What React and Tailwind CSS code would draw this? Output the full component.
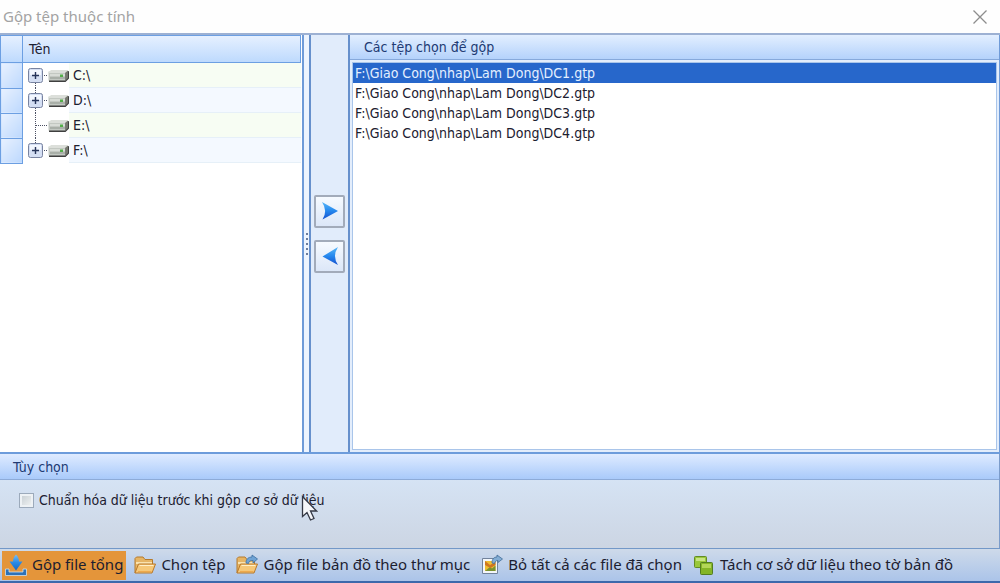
import { useState } from "react";

const drives = [
  { name: "C:\\", expandable: true },
  { name: "D:\\", expandable: true },
  { name: "E:\\", expandable: false },
  { name: "F:\\", expandable: true },
];

const files = [1, 2, 3, 4].map((n) => `F:\\Giao Cong\\nhap\\Lam Dong\\DC${n}.gtp`);

function Branch({ first, last, expandable }) {
  return (
    <svg width="25" height="25" viewBox="0 0 25 25" aria-hidden="true">
      <g stroke="#4b5063" strokeDasharray="1 1" fill="none">
        {!first && <path d="M12.5 0V12" />}
        {!last && <path d="M12.5 12V25" />}
        <path d="M13 12.5H25" />
      </g>
      {expandable && (
        <>
          <rect x="5.500" y="5.500" width="14" height="14" rx="2" fill="#d5dff3" stroke="#7883a0" />
          <rect x="7" y="7" width="11" height="5" fill="#f3f7ff" />
          <path d="M9 12.500h7M12.500 9v7" stroke="#263459" strokeWidth="1.400" />
        </>
      )}
    </svg>
  );
}

function DriveIcon() {
  return (
    <svg width="21" height="14" viewBox="0 0 21 14" aria-hidden="true">
      <path d="M1 3h17l3-1v7.500L17.500 13H1z" fill="#3f3f3f" />
      <path d="M.5 2.500h17v9H.5z" fill="#c3c8c2" />
      <path d="M.5 3.500 3 1h17L17.500 4H1z" fill="#dcdfda" />
      <path d="M17.500 3.500 20 1.500v7.500l-2.500 2.500z" fill="#77796f" />
      <path d="M2 6h15" stroke="#edf0eb" />
      <path d="M2 9h15" stroke="#90978f" />
      <rect x="12" y="5.500" width="3" height="2.500" fill="#53ae48" />
    </svg>
  );
}

function Arrow({ left }) {
  return (
    <svg width="20" height="20" viewBox="0 0 20 20" aria-hidden="true">
      <defs>
        <linearGradient id={left ? "arrowL" : "arrowR"} x1="0" y1="0" x2="0" y2="1">
          <stop offset="0" stopColor="#58b7f8" />
          <stop offset=".5" stopColor="#2588ee" />
          <stop offset="1" stopColor="#1550cf" />
        </linearGradient>
      </defs>
      {left ? (
        <path d="M18 1Q12 10 18 19L2.500 10.500z" fill="url(#arrowL)" />
      ) : (
        <path d="M2 1Q8 10 2.500 18.500L18 10z" fill="url(#arrowR)" />
      )}
    </svg>
  );
}

function DownloadIcon() {
  return (
    <svg width="22" height="22" viewBox="0 0 22 22" aria-hidden="true">
      <defs>
        <linearGradient id="down" x1="0" y1="0" x2="0" y2="1">
          <stop offset="0" stopColor="#7cc0f3" />
          <stop offset=".5" stopColor="#2b8be6" />
          <stop offset="1" stopColor="#1668c4" />
        </linearGradient>
      </defs>
      <path d="M.5 15h3.500v3h14v-3h3.500v6.500H.5z" fill="#2d72b8" stroke="#cfe2ee" strokeWidth=".8" />
      <path d="M11 .5c2 2 3 4 3 7h3.500L11 16.500 4.500 7.500H8c0-3 1-5 3-7z" fill="url(#down)" />
    </svg>
  );
}

function FolderShape() {
  return (
    <>
      <path d="M1 19V4.500L2.500 3H9l2 2.500h7.500V10" fill="#e6b565" stroke="#b57a2c" />
      <path d="M2 9h16" stroke="#f9e3b0" strokeWidth="2" />
      <path d="m1 19 3.500-9h17L18 19z" fill="#f6c878" stroke="#b9782a" />
      <path d="M5.500 11.500h14" stroke="#fff0c8" />
      <path d="M4 17.500h13.500" stroke="#eda94e" />
    </>
  );
}

function FolderIcon() {
  return (
    <svg width="22" height="22" viewBox="0 0 22 22" aria-hidden="true">
      <FolderShape />
    </svg>
  );
}

function FolderArrowIcon() {
  return (
    <svg width="22" height="22" viewBox="0 0 22 22" aria-hidden="true">
      <FolderShape />
      <path d="M10 9c0-4 2.500-6 6-6V1l5.500 4L17 9V6.500c-3 0-4 .5-4.500 3z" fill="#6fa3d4" stroke="#3c6f9f" strokeWidth=".8" />
    </svg>
  );
}

function PictureArrowIcon() {
  return (
    <svg width="22" height="22" viewBox="0 0 22 22" aria-hidden="true">
      <path d="M1.500 4.500h15v15h-15z" fill="#f3f6f9" stroke="#72839b" />
      <path d="M4 7h10.500v10H4z" fill="#efbd31" />
      <path d="m4 17 5-4 2 1.500 3.500-3V17z" fill="#799230" />
      <path d="m4 7 5 4 5.500-3v3l-5 3L4 11z" fill="#cd7523" />
      <path d="M11 9c0-4 2-6 5-6V1l5.500 4L17 8.500v-2c-2 0-3 1-3.500 3z" fill="#83add4" stroke="#426d98" strokeWidth=".8" />
    </svg>
  );
}

function SquaresIcon() {
  return (
    <svg width="22" height="22" viewBox="0 0 22 22" aria-hidden="true">
      <rect x="1.500" y="2.500" width="12" height="11" rx="1" fill="#9ac83b" stroke="#628b26" />
      <path d="M3 4h9v3H3z" fill="#c8e483" />
      <rect x="7.500" y="8.500" width="12" height="12" rx="1" fill="#84b526" stroke="#537d1f" />
      <path d="M9 10h9v4H9z" fill="#b3d657" />
    </svg>
  );
}

const actions = [
  { label: "Gộp file tổng", Icon: DownloadIcon },
  { label: "Chọn tệp", Icon: FolderIcon },
  { label: "Gộp file bản đồ theo thư mục", Icon: FolderArrowIcon },
  { label: "Bỏ tất cả các file đã chọn", Icon: PictureArrowIcon },
  { label: "Tách cơ sở dữ liệu theo tờ bản đồ", Icon: SquaresIcon },
];

export default function App() {
  const [selected, setSelected] = useState(0);
  const [normalize, setNormalize] = useState(false);
  return (
    <div className="flex h-screen flex-col overflow-hidden bg-white font-['DejaVu_Sans_Condensed','DejaVu_Sans',sans-serif] text-sm text-[#1c2030]">
      <header className="flex h-[33px] shrink-0 items-center justify-between bg-[#fefefe] pr-3 pl-[3px]">
        <h1 className="font-['Noto_Sans',sans-serif] text-[15px] text-[#a3a3a3]">Gộp tệp thuộc tính</h1>
        <button aria-label="Đóng" className="flex">
          <svg width="16" height="16" viewBox="0 0 16 16" aria-hidden="true">
            <path d="m1.500 1.500 13 13m0-13-13 13" stroke="#8d8d8d" strokeWidth="1.300" />
          </svg>
        </button>
      </header>

      <main className="flex min-h-0 flex-1 border-t-2 border-b-2 border-t-[#9db1d3] border-b-[#6d9cdb] bg-[#e3edfb]">
        <section className="w-[304px] shrink-0 border-r-2 border-[#6f9bd8] bg-white pr-px">
          <table className="w-full border-collapse">
            <thead>
              <tr className="h-[27px] bg-linear-to-b from-[#e6f0ff] to-[#bcd9fd]">
                <th className="w-[22px] border border-[#6c9fe2]" />
                <th className="border border-[#6c9fe2] px-[6px] text-left font-normal">Tên</th>
              </tr>
            </thead>
            <tbody>
              {drives.map((d, i) => (
                <tr key={d.name} className="h-[25px]">
                  <td className="border border-[#6c9fe2] bg-linear-to-br from-[#e8f1ff] to-[#bcd8fd] p-0" />
                  <td className="p-0">
                    <div className="flex items-center">
                      {d.expandable ? (
                        <button aria-label={`Mở rộng ${d.name}`} className="flex">
                          <Branch first={i === 0} last={i === drives.length - 1} expandable />
                        </button>
                      ) : (
                        <Branch />
                      )}
                      <DriveIcon />
                      <span
                        className={`flex h-[25px] flex-1 items-center border-b border-[#e6f0f8] pl-1 ${i % 2 ? "bg-[#f4f9ff]" : "bg-[#f7fdf3]"}`}
                      >
                        {d.name}
                      </span>
                    </div>
                  </td>
                </tr>
              ))}
            </tbody>
          </table>
        </section>

        <div className="flex w-[5px] shrink-0 flex-col items-center justify-center gap-[3px] bg-[#edf4fe]">
          {[0, 1, 2, 3, 4].map((n) => (
            <span key={n} className="size-[2px] bg-[#6a7c9c]" />
          ))}
        </div>

        <div className="flex w-[41px] shrink-0 flex-col items-center justify-center gap-3 border-x-2 border-[#6690cc] bg-[#e1ecfb] pb-5">
          <button aria-label="Thêm tệp" className="flex h-[33px] w-[31px] items-center justify-center rounded-xs border-2 border-[#a2abba] bg-linear-to-b from-[#f6faff] to-[#dce7f8]">
            <Arrow />
          </button>
          <button aria-label="Bỏ tệp" className="flex h-[33px] w-[31px] items-center justify-center rounded-xs border-2 border-[#a2abba] bg-linear-to-b from-[#f6faff] to-[#dce7f8]">
            <Arrow left />
          </button>
        </div>

        <section className="flex min-w-0 flex-1 flex-col border-r border-[#6f9bd8]">
          <h2 className="flex h-[25px] shrink-0 items-center border-b border-[#86a9db] bg-linear-to-b from-[#e3efff] to-[#b4d2fb] pl-[14px] text-[#213a73]">
            Các tệp chọn để gộp
          </h2>
          <ul role="listbox" aria-label="Các tệp chọn để gộp" className="m-[2px] flex-1 border border-[#a9c5ea] bg-white">
            {files.map((f, i) => (
              <li
                key={f}
                role="option"
                aria-selected={i === selected}
                onClick={() => setSelected(i)}
                className={`h-5 cursor-default pl-[2px] leading-5 ${i === selected ? "bg-[#2767cb] text-[#e4efff]" : ""}`}
              >
                {f}
              </li>
            ))}
          </ul>
        </section>
      </main>

      <section className="shrink-0 border-r border-[#7b9ccb]">
        <h2 className="flex h-[26px] items-center border-b border-[#8dabd8] bg-linear-to-b from-[#dfebff] to-[#a9cafa] pl-[13px] text-[#213a73]">
          Tùy chọn
        </h2>
        <div className="h-[68px] bg-linear-to-b from-[#d5e3f4] to-[#ccd5e3] pt-[10px] pl-[19px]">
          <div className="relative w-fit">
            <label className="flex items-center gap-[5px] leading-5">
              <input
                type="checkbox"
                checked={normalize}
                onChange={(e) => setNormalize(e.target.checked)}
                className="size-[15px] appearance-none border border-[#9caabb] bg-linear-to-br from-[#c3cbd0] to-[#f5f7f7] shadow-[inset_0_0_0_2px_#eef2f5] checked:bg-[#2767cb]"
              />
              Chuẩn hóa dữ liệu trước khi gộp cơ sở dữ liệu
            </label>
            <svg className="pointer-events-none absolute top-[5px] right-[6px]" width="17" height="27" viewBox="0 0 17 27" aria-hidden="true">
              <path d="M1.500 1.500v20l4.500-4 3.500 7.500 3.500-1.500L9.500 16h6z" fill="#f6f7fa" stroke="#343844" strokeWidth="1.300" />
            </svg>
          </div>
        </div>
      </section>

      <footer className="flex h-[35px] shrink-0 items-center gap-[5px] border-t border-b-2 border-t-[#7398c8] border-b-[#3c69ab] bg-linear-to-b from-[#cedaea] to-[#abc4e9] pl-[2px] font-['Noto_Sans',sans-serif] text-[15px] whitespace-nowrap">
        {actions.map(({ label, Icon }, i) => (
          <button
            key={label}
            className={`flex h-[29px] items-center gap-[5px] px-[3px] ${i === 0 ? "bg-[#e4953a]" : "hover:bg-[#f3c98f]"}`}
          >
            <Icon />
            {label}
          </button>
        ))}
      </footer>
    </div>
  );
}
